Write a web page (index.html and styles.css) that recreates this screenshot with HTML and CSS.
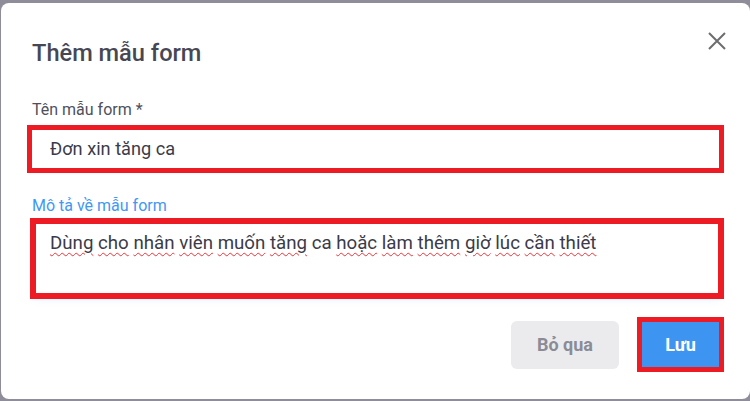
FILE: index.html
```html
<!DOCTYPE html>
<html lang="vi">
<head>
<meta charset="utf-8">
<title>Thêm mẫu form</title>
<link rel="stylesheet" href="styles.css">
</head>
<body>
<div class="dialog">
  <button class="close" aria-label="Đóng">
    <svg width="18" height="18" viewBox="0 0 18 18"><path d="M1 1L17 17M17 1L1 17" stroke="#6d6d70" stroke-width="2" fill="none"/></svg>
  </button>
  <h1 class="title">Thêm mẫu form</h1>
  <label class="label">Tên mẫu form *</label>
  <div class="input">Đơn xin tăng ca</div>
  <label class="label label-active">Mô tả về mẫu form</label>
  <div class="textarea"><span class="sp">Dùng</span> <span class="sp">cho</span> <span class="sp">nhân</span> <span class="sp">viên</span> <span class="sp">muốn</span> <span class="sp">tăng</span> ca <span class="sp">hoặc</span> <span class="sp">làm</span> <span class="sp">thêm</span> <span class="sp">giờ</span> <span class="sp">lúc</span> <span class="sp">cần</span> <span class="sp">thiết</span></div>
  <div class="footer">
    <button class="btn btn-cancel">Bỏ qua</button>
    <button class="btn btn-save">Lưu</button>
  </div>
</div>
</body>
</html>
```
FILE: styles.css
```css
html, body {
  margin: 0;
  padding: 0;
}
body {
  width: 750px;
  height: 401px;
  background: #8f8d99;
  font-family: Roboto, "Noto Sans", sans-serif;
  overflow: hidden;
}
.dialog {
  position: relative;
  box-sizing: border-box;
  margin: 3px 0 0 1px;
  width: 749px;
  height: 396px;
  background: #ffffff;
  border-radius: 8px;
  padding: 36px 26px 24px 26px;
  display: flex;
  flex-direction: column;
}
.close {
  position: absolute;
  top: 26px;
  right: 21px;
  padding: 3px;
  border: 0;
  background: none;
  line-height: 0;
}
.title {
  margin: 0;
  padding-left: 5px;
  font-size: 23.6px;
  line-height: 28px;
  font-weight: 500;
  color: #474754;
}
.label {
  display: block;
  margin-top: 33px;
  padding-left: 5px;
  font-size: 16px;
  line-height: 20px;
  color: #50505b;
}
.label-active {
  margin-top: 23px;
  color: #3f98f4;
}
.input {
  box-sizing: border-box;
  margin-top: 5px;
  height: 48px;
  border: 5px solid #ed1c24;
  padding-left: 18px;
  font-size: 18.2px;
  line-height: 38px;
  color: #3b3b49;
}
.textarea {
  position: relative;
  box-sizing: border-box;
  margin: 5px 3px 0 6px;
  height: 75px;
  border: 1px solid #3f98f4;
  border-radius: 5px;
  box-shadow: 0 3px 10px rgba(63, 152, 244, 0.12);
  padding: 10px 16px 0 16px;
  font-size: 18.7px;
  line-height: 22px;
  color: #3b3b49;
}
.textarea::after {
  content: "";
  position: absolute;
  top: -4px;
  left: -4px;
  right: -4px;
  bottom: -4px;
  border: 6px solid #ed1c24;
}
.sp {
  text-decoration: underline wavy #e8353b;
  text-decoration-thickness: 1px;
  text-underline-offset: 3px;
}
.footer {
  margin-top: 21px;
  display: flex;
  justify-content: flex-end;
  align-items: center;
  gap: 18px;
}
.btn {
  font-family: Roboto, "Noto Sans", sans-serif;
  font-size: 18px;
  font-weight: 700;
  border: 0;
  padding: 0;
}
.btn-cancel {
  width: 108px;
  height: 48px;
  border-radius: 6px;
  background: #ebebee;
  color: #8b8b96;
}
.btn-save {
  box-sizing: border-box;
  width: 87px;
  height: 55px;
  border: 5px solid #ed1c24;
  background: #3e95f1;
  color: #ffffff;
}
```
